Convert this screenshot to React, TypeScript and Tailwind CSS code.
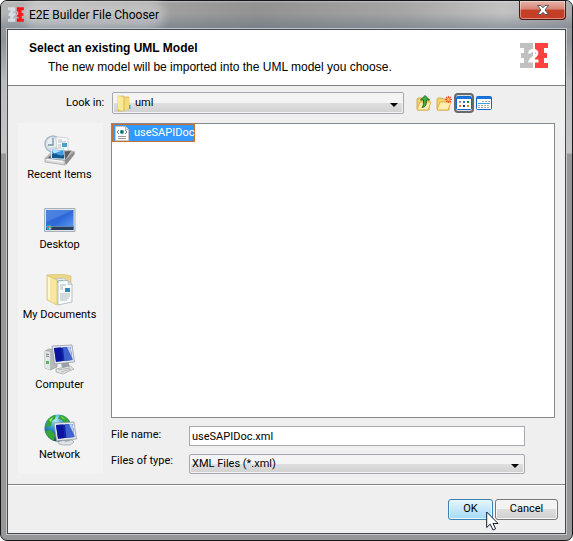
import React from "react";

const RecentIcon = () => (
  <svg width="32" height="32" viewBox="0 0 32 32" aria-hidden="true">
    <circle cx="9" cy="10" r="8" fill="#d3e0e8" stroke="#a9bac5" strokeWidth="1.5" />
    <circle cx="8" cy="9" r="5" fill="#e6eff4" />
    <path d="M9 4v7H4" fill="none" stroke="#7891a4" strokeWidth="1.3" />
    <path d="M12 3l12 1v17l-11-2z" fill="#fbfbfb" stroke="#c3c6ca" strokeWidth=".7" />
    <path d="M14 6h4M14 8h8M14 11h3M14 13h3" stroke="#a9b3bd" strokeWidth=".9" />
    <path d="M18 9h5v4h-5z" fill="#46a3cf" />
    <path d="M1 24l7-7 19-1 4 2-9 12-21-3z" fill="#b5b6b6" />
    <path d="M4 24l6-6 17-1-6 9z" fill="#595d5f" />
    <path d="M7 14l13 1 1 11-14-1z" fill="#f6fafc" stroke="#a3adb4" strokeWidth=".5" />
    <path d="M8 15.500l11.500.7.700 8.300-12.200-.6z" fill="#3f9be6" />
    <path d="M8 20c4-3 6 3 12 1v3.500l-12-.6z" fill="#15588a" />
    <path d="M8 16l10 .5-8 3z" fill="#b9e7fc" />
    <path d="M1 24l20 2.500v4.500L1 28z" fill="#dcdcdc" stroke="#8b8d8e" strokeWidth=".6" />
    <path d="M21 26.500L30.500 17v3.500L22 31z" fill="#8a8c8d" />
    <path d="M3 25.500l16 2" stroke="#fff" />
  </svg>
);

const DesktopIcon = () => (
  <svg width="32" height="32" viewBox="0 0 32 32" aria-hidden="true">
    <defs>
      <linearGradient id="desk" x1="0" y1="0" x2="1" y2="1">
        <stop offset="0" stopColor="#3b74d6" />
        <stop offset=".5" stopColor="#2e68d8" />
        <stop offset="1" stopColor="#5fa3f4" />
      </linearGradient>
    </defs>
    <path d="M.5 4.500h30.500v23H.5z" fill="#dce3ea" stroke="#a7b0b9" />
    <path d="M2 6h27.500v20H2z" fill="url(#desk)" />
    <path d="M2 6h27.500L2 18z" fill="#8cb8f4" opacity=".25" />
    <path d="M2 22h27.500v4H2z" fill="#253f5d" />
    <path d="M2 22h27.500v1H2z" fill="#6488ad" />
    <circle cx="5" cy="23.500" r="2.800" fill="#1fa2d8" />
    <path d="M3.500 22h1.500v1.500H3.500z" fill="#f4622b" />
    <path d="M5.200 22h1.500v1.500H5.200z" fill="#91d84b" />
    <path d="M5.200 24h1.500v1.200H5.200z" fill="#ffdc4a" />
  </svg>
);

const DocumentsIcon = () => (
  <svg width="32" height="32" viewBox="0 0 32 32" aria-hidden="true">
    <path d="M3 1l15-1 9 2v24l-14 4z" fill="#ecd68a" stroke="#d3bd6c" strokeWidth=".6" />
    <path d="M11 5l9-1 2 2v21l-11 3z" fill="#e4ecf1" stroke="#a9b3ba" strokeWidth=".6" />
    <path d="M12 7l7-1v2l-7 1z" fill="#47b5a4" />
    <path d="M14 7l10-.5 4 4V28l-14 3z" fill="#f8fbfc" stroke="#9fa9b1" strokeWidth=".7" />
    <path d="M24 6.500v4h4z" fill="#d8e0e6" stroke="#a5afb7" strokeWidth=".5" />
    <path d="M16 11h6M16 13h3M16 15h3M16 20h10M16 22h10M16 24h9M16 26h7" stroke="#9ba9b7" strokeWidth=".8" />
    <path d="M21 14h5v4h-5z" fill="#328cba" />
    <path d="M3 1l10 5v25L3 26z" fill="#f8e6a2" stroke="#d7bd65" strokeWidth=".7" />
    <path d="M4 3l2 1v22l-2-1z" fill="#fff8cf" />
  </svg>
);

const ScreenShape = () => (
  <g>
    <path d="M0 1L20 0l2.500 17L2.500 19z" fill="#e4e8eb" stroke="#8b939b" strokeWidth=".7" />
    <path d="M2 3l16.500-1 1.900 13L4 16.700z" fill="#1029a8" />
    <path d="M2 3l7-.4 1.500 13.400L4 16.700z" fill="#0b159b" />
    <path d="M11 2.500l7.500-.5 1.900 13-7.900.8z" fill="#3f62cf" />
    <path d="M15 2.200l3.500-.2 1.700 11z" fill="#b4cdf6" />
  </g>
);

const ComputerIcon = () => (
  <svg width="32" height="32" viewBox="0 0 32 32" aria-hidden="true">
    <path d="M1 7l4-2 8 1v17l-7 3-5-2z" fill="#b6babb" stroke="#8c9192" strokeWidth=".6" />
    <path d="M1 7l5 1v18l-5-2z" fill="#e3e6e6" />
    <path d="M2 10l3 .5M2 12l3 .5" stroke="#757b7b" />
    <path d="M2 17h3v3H2z" fill="#50ba4f" />
    <path d="M17 18l7-1 2 6-8 1z" fill="#9ba0a4" />
    <path d="M12 25l14-3 4 3-11 5-7-2z" fill="#e5e7e8" stroke="#8f9497" strokeWidth=".6" />
    <path d="M14 26l12-2M17 28l10-3" stroke="#a4a8aa" strokeWidth=".8" />
    <g transform="translate(8 1)">
      <ScreenShape />
    </g>
  </svg>
);

const NetworkIcon = () => (
  <svg width="34" height="32" viewBox="0 0 34 32" aria-hidden="true">
    <defs>
      <radialGradient id="globe" cx=".4" cy=".2" r=".8">
        <stop offset="0" stopColor="#b7effe" />
        <stop offset=".4" stopColor="#3295d3" />
        <stop offset="1" stopColor="#12356f" />
      </radialGradient>
    </defs>
    <circle cx="15" cy="14" r="13.500" fill="url(#globe)" />
    <path d="M4 7c3-5 7-6 9-6l-1 4-3 2-1 5-5 1zM17 1c4 0 8 3 10 7l-6 1-2-3-4-1zM2 17l6-1 4 5-1 6C7 25 3 21 2 17z" fill="#36a636" />
    <path d="M6 6l4-3-2 5zM18 2l5 4-4-2z" fill="#a5e86b" />
    <path d="M15 28l6-2h8l2 2-4 3h-7l-4-1z" fill="#dfe3e5" stroke="#999fa3" strokeWidth=".7" />
    <path d="M20 24l6-1 1 4-5 1z" fill="#a7adb3" />
    <g transform="translate(11 8)">
      <ScreenShape />
    </g>
  </svg>
);

const Logo = ({ className, gray, red, two }: { className: string; gray: string; red: string; two: string }) => (
  <svg className={className} viewBox="0 0 28 25" aria-hidden="true">
    <path d="M0 0h13v25H0v-5h4v-5H1v-5h3V5H0z" fill={gray} />
    <path d="M15 0h13v5h-4v5h3v5h-3v5h4v5H15z" fill={red} />
    <path d="M13 0h2v7h-2zM13 19h2v6h-2z" fill={two} />
    <path d="M9.500 10.500c.3-4.500 7.500-4 7.500-.2 0 3.200-5.500 4.200-7 7.700h8.500" fill="none" stroke={two} strokeWidth="2.800" />
  </svg>
);

const FolderIcon = () => (
  <svg width="15" height="17" viewBox="0 0 15 17" aria-hidden="true">
    <path d="M1 1h6l1 1h4v12H8l-1 2H1z" fill="#e9ce67" stroke="#d5b64f" strokeWidth=".6" />
    <path d="M1 1l5 1v14l-5-2z" fill="#fae99b" />
    <path d="M8 3h4v11l-4 1z" fill="#f4dc7d" />
    <path d="M12 10h1.500v4H12z" fill="#3ea5e7" />
  </svg>
);

const OpenFolder = () => (
  <>
    <path d="M1 4l1-1h4l1 1h6v11H2L1 14z" fill="#f3d273" stroke="#cf9c36" strokeWidth=".8" />
    <path d="M4 7h11l-3 8H1z" fill="#ffefae" stroke="#d9a33a" strokeWidth=".8" />
  </>
);

const UpIcon = () => (
  <svg width="16" height="16" viewBox="0 0 16 16" aria-hidden="true">
    <OpenFolder />
    <path d="M9 .5l4.500 4.500h-3c0 5-1 7-4.500 7.500C7.500 11 7.500 9 7.500 5H4.500z" fill="#3fae3a" stroke="#14691d" strokeWidth=".9" />
  </svg>
);

const NewFolderIcon = () => (
  <svg width="16" height="16" viewBox="0 0 16 16" aria-hidden="true">
    <OpenFolder />
    <path d="M12.500 1v7M9 4.500h7M10 2l5 5M15 2l-5 5" stroke="#f0512e" strokeWidth="1.200" />
    <circle cx="12.500" cy="4.500" r="1.500" fill="#ffc252" />
  </svg>
);

const ListIcon = () => (
  <svg className="shrink-0" width="16" height="16" viewBox="0 0 16 16" aria-hidden="true">
    <rect x=".5" y="1.500" width="15" height="13" rx="1" fill="#fff" stroke="#1265c4" />
    <path d="M1 1.500h14V4H1z" fill="#1975dc" />
    <path d="M3 6h2v2H3z" fill="#8d91b8" />
    <path d="M7 6h2v2H7z" fill="#2675db" />
    <path d="M11 6h2v2h-2z" fill="#119032" />
    <path d="M3 10h2v2H3z" fill="#ef7044" />
    <path d="M7 10h2v2H7z" fill="#17358d" />
    <path d="M11 10h2v2h-2z" fill="#c29315" />
  </svg>
);

const DetailsIcon = () => (
  <svg width="16" height="16" viewBox="0 0 16 16" aria-hidden="true">
    <rect x=".5" y="1.500" width="15" height="13" rx="1" fill="#fff" stroke="#1265c4" />
    <path d="M1 1.500h14V4H1z" fill="#1975dc" />
    <path d="M2 8.500h12" stroke="#3aa0df" />
    <path d="M6 6.500h8M2 10.500h12M2 12.500h12" stroke="#aaa" strokeDasharray="2 1" />
  </svg>
);

const XmlIcon = () => (
  <svg width="14" height="15" viewBox="0 0 14 15" aria-hidden="true">
    <path d="M.5.500h10l3 3v11H.500z" fill="#fff" stroke="#c8c8c8" />
    <path d="M10.500.500v3h3" fill="#e8e8e8" stroke="#b8b8b8" />
    <path d="M4 4L2 6l2 2M10 4l2 2-2 2" fill="none" stroke="#777" />
    <circle cx="7" cy="6" r="2" fill="#168d7b" />
    <circle cx="6.500" cy="5.500" r=".9" fill="#174b7e" />
    <path d="M3 10.500h8M3 12.500h8" stroke="#999" />
  </svg>
);

const Arrow = () => (
  <svg className="pointer-events-none absolute right-[6px] top-1/2" width="8" height="4" viewBox="0 0 8 4" aria-hidden="true">
    <path d="M0 0h8L4 4z" fill="#000" />
  </svg>
);

const Cursor = () => (
  <svg className="pointer-events-none absolute left-[38px] top-[12px] z-10" width="13" height="20" viewBox="0 0 13 20" aria-hidden="true">
    <path d="M.7 1v15.500l3.500-3.300L7 19l2.600-1.200L7 12.500h5z" fill="#fff" stroke="#111b30" />
  </svg>
);

const places = [
  { label: "Recent Items", icon: <RecentIcon /> },
  { label: "Desktop", icon: <DesktopIcon /> },
  { label: "My Documents", icon: <DocumentsIcon /> },
  { label: "Computer", icon: <ComputerIcon /> },
  { label: "Network", icon: <NetworkIcon /> },
];

const selectStyle =
  "block w-full appearance-none rounded-[2px] border border-[#a5a8ad] bg-linear-to-b from-[#f4f4f4] from-50% via-[#dfdfdf] via-50% to-[#d0d0d0] shadow-[inset_0_0_0_1px_#f3f3f3] outline-none";

const App = () => {
  return (
    <div className="min-h-screen bg-white text-[11px] text-black font-[Roboto,sans-serif]">
      <div className="flex min-h-screen flex-col rounded-[7px] border border-[#15171a] bg-[linear-gradient(to_bottom,#a3a3a3_0px,#8f949a_40px,#b7babe_80px,#c5c5c5_152px,#979797_153px)] px-[5px] pb-[5px]">
        <header className="-mx-[5px] flex h-[27px] shrink-0 items-start rounded-t-[6px] bg-[linear-gradient(to_bottom,#ffffff55_0px,#ffffff00_2px,#ffffff00_12px,#5d6c7c77_27px),linear-gradient(to_right,#b5b5b5,#a8a8a8_20%,#929292_45%,#a5a5a5_70%,#c2c2c2_88%,#aaaaaa)] pl-[7px] pr-[6px]">
          <Logo className="mt-[6px] h-[15px] w-[16px]" gray="#d6dde7" red="#fa0b0b" two="#b4b8be" />
          <h1 className="ml-[5px] mt-[5px] rounded-full bg-white/30 text-[12px] leading-[18px] shadow-[0_0_8px_6px_#ffffff4d]">
            E2E Builder File Chooser
          </h1>
          <button
            aria-label="Close"
            className="ml-auto flex h-[19px] w-[47px] items-center justify-center rounded-b-[4px] border border-t-0 border-[#4b1717] bg-linear-to-b from-[#e8b5aa] from-0% via-[#d58475] via-45% to-[#c53f27] to-50% shadow-[inset_0_0_0_1px_#ffffff66]"
          >
            <svg width="12" height="10" viewBox="0 0 12 10" aria-hidden="true">
              <path d="M.5.500h3.500l2 2.200 2-2.200h3.500L8 5l3.500 4.500H8L6 7.300 4 9.500H.500L4 5z" fill="#fff" stroke="#535666" />
            </svg>
          </button>
        </header>

        <div className="flex flex-1 flex-col border border-[#c3c7cc]">
          <main className="flex flex-1 flex-col border border-[#45494d] bg-[#efefef]">
            <div className="flex h-[56px] shrink-0 items-start justify-between border-b border-[#828282] bg-white pl-[21px] pr-[17px] text-[12px] font-['Liberation_Sans',sans-serif]">
              <div className="pt-[9px]">
                <h2 className="leading-[18px] font-bold">Select an existing UML Model</h2>
                <p className="pl-[19px] leading-[20px]">The new model will be imported into the UML model you choose.</p>
              </div>
              <Logo className="mt-[13px] h-[25px] w-[28px]" gray="#c0c0c0" red="#ff4040" two="#fff" />
            </div>

            <div className="flex items-center pl-[58px] pr-[10px] pt-[6px]">
              <label htmlFor="look" className="w-[46px] leading-[22px]">Look in:</label>
              <div className="relative min-w-0 flex-1">
                <span className="pointer-events-none absolute left-[5px] top-[3px]">
                  <FolderIcon />
                </span>
                <select id="look" className={`${selectStyle} h-[22px] pl-[22px]`}>
                  <option>uml</option>
                </select>
                <Arrow />
              </div>
              <div className="ml-[10px] mr-[61px] flex items-center">
                <button aria-label="Up one level" className="flex size-[20px] items-center justify-center"><UpIcon /></button>
                <button aria-label="Create new folder" className="flex size-[20px] items-center justify-center"><NewFolderIcon /></button>
                <button aria-label="List" className="flex size-[20px] items-center justify-center rounded-[4px] border-2 border-[#66696e] bg-[#dedede]"><ListIcon /></button>
                <button aria-label="Details" className="flex size-[20px] items-center justify-center"><DetailsIcon /></button>
              </div>
            </div>

            <div className="flex flex-1 gap-2 pb-[10px] pl-[10px] pr-[10px] pt-[9px]">
              <nav className="flex w-[85px] shrink-0 flex-col gap-5 bg-[#f3f3f3] pr-[2px] pt-[11px]">
                {places.map((place) => (
                  <button key={place.label} className="flex flex-col items-center whitespace-nowrap leading-[18px]">
                    {place.icon}
                    <span>{place.label}</span>
                  </button>
                ))}
              </nav>

              <div className="flex min-w-0 flex-1 flex-col">
                <ul className="flex-1 border border-[#848891] bg-white">
                  <li>
                    <button className="flex h-[18px] items-center gap-[5px] border border-[#c8712c] bg-[#3399ff] pl-[2px] text-white">
                      <XmlIcon />
                      useSAPIDoc
                    </button>
                  </li>
                </ul>
                <div className="mt-2 grid grid-cols-[78px_1fr] gap-y-2 pr-[30px]">
                  <label htmlFor="name" className="leading-[18px]">File name:</label>
                  <input id="name" className="h-[20px] w-full border border-[#a5a8ad] bg-white px-[2px] outline-none" defaultValue="useSAPIDoc.xml" />
                  <label htmlFor="type" className="leading-[14px]">Files of type:</label>
                  <div className="relative">
                    <select id="type" className={`${selectStyle} h-[20px] pl-[2px]`}>
                      <option>XML Files (*.xml)</option>
                    </select>
                    <Arrow />
                  </div>
                </div>
              </div>
            </div>

            <footer className="flex justify-end gap-[2px] border-t border-[#828282] pb-[13px] pr-[7px] pt-[14px] shadow-[inset_0_1px_0_#fff]">
              <div className="relative">
                <button className="h-[21px] w-[45px] rounded-[3px] border border-[#3c7fb1] bg-linear-to-b from-[#e8f6fd] from-0% via-[#c4e8fa] via-50% to-[#a3daf5] shadow-[inset_0_0_0_1px_#e7f7ff]">OK</button>
                <Cursor />
              </div>
              <button className="h-[21px] w-[63px] rounded-[3px] border border-[#777] bg-linear-to-b from-[#f3f3f3] from-50% via-[#dedede] via-50% to-[#cfcfcf] shadow-[inset_0_0_0_1px_#f7f7f7]">Cancel</button>
            </footer>
          </main>
        </div>
      </div>
    </div>
  );
};

export default App;
